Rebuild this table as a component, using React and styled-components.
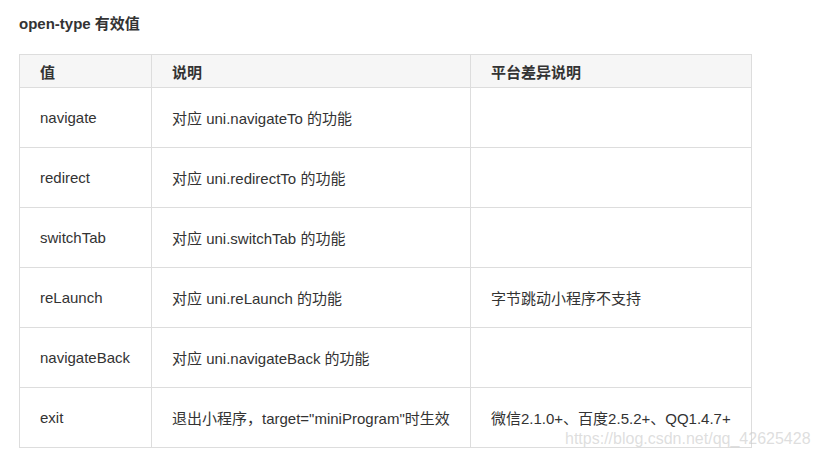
import styled, { createGlobalStyle } from "styled-components"

const GlobalStyle = createGlobalStyle`
    body{
        margin:0;
        background:#fff;
        font-family:"Liberation Sans", "Noto Sans CJK SC", sans-serif;
        color:#333;
    }
`

const rows = [
    ["navigate", "对应 uni.navigateTo 的功能", ""],
    ["redirect", "对应 uni.redirectTo 的功能", ""],
    ["switchTab", "对应 uni.switchTab 的功能", ""],
    ["reLaunch", "对应 uni.reLaunch 的功能", "字节跳动小程序不支持"],
    ["navigateBack", "对应 uni.navigateBack 的功能", ""],
    ["exit", "退出小程序，target=\"miniProgram\"时生效", "微信2.1.0+、百度2.5.2+、QQ1.4.7+"],
]

const App = () => {
    return (
        <Page>
            <GlobalStyle />
            <Title>open-type 有效值</Title>
            <Table>
                <thead>
                    <tr>
                        <Th>值</Th>
                        <Th>说明</Th>
                        <Th>平台差异说明</Th>
                    </tr>
                </thead>
                <tbody>
                    {rows.map((r) => (
                        <tr key={r[0]}>
                            <Td>{r[0]}</Td>
                            <Td>{r[1]}</Td>
                            <Td>{r[2]}</Td>
                        </tr>
                    ))}
                </tbody>
            </Table>
            <Watermark>https://blog.csdn.net/qq_42625428</Watermark>
        </Page>
    )
}

const Page = styled.div`
    position:relative;
    width:817px;
    height:459px;
    padding:14px 0 0 19px;
    box-sizing:border-box;
    overflow:hidden;
`

const Title = styled.h3`
    margin:0 0 20px 0;
    font-size:15px;
    font-weight:bold;
    line-height:20px;
    color:#333;
`

const Table = styled.table`
    border-collapse:collapse;
    table-layout:fixed;
    width:733px;
    font-size:15px;
`

const Th = styled.th`
    background:#f6f6f6;
    border:1px solid #ddd;
    height:32px;
    padding:0 0 0 20px;
    text-align:left;
    font-weight:bold;
    color:#333;
    &:nth-child(1){ width:111px; }
    &:nth-child(2){ width:298px; }
`

const Td = styled.td`
    border:1px solid #ddd;
    height:59px;
    padding:0 0 0 20px;
    color:#333;
    white-space:nowrap;
`

const Watermark = styled.div`
    position:absolute;
    left:565px;
    top:430px;
    font-size:16px;
    color:rgba(200,200,200,0.6);
    font-family:"Liberation Sans", sans-serif;
`

export default App
